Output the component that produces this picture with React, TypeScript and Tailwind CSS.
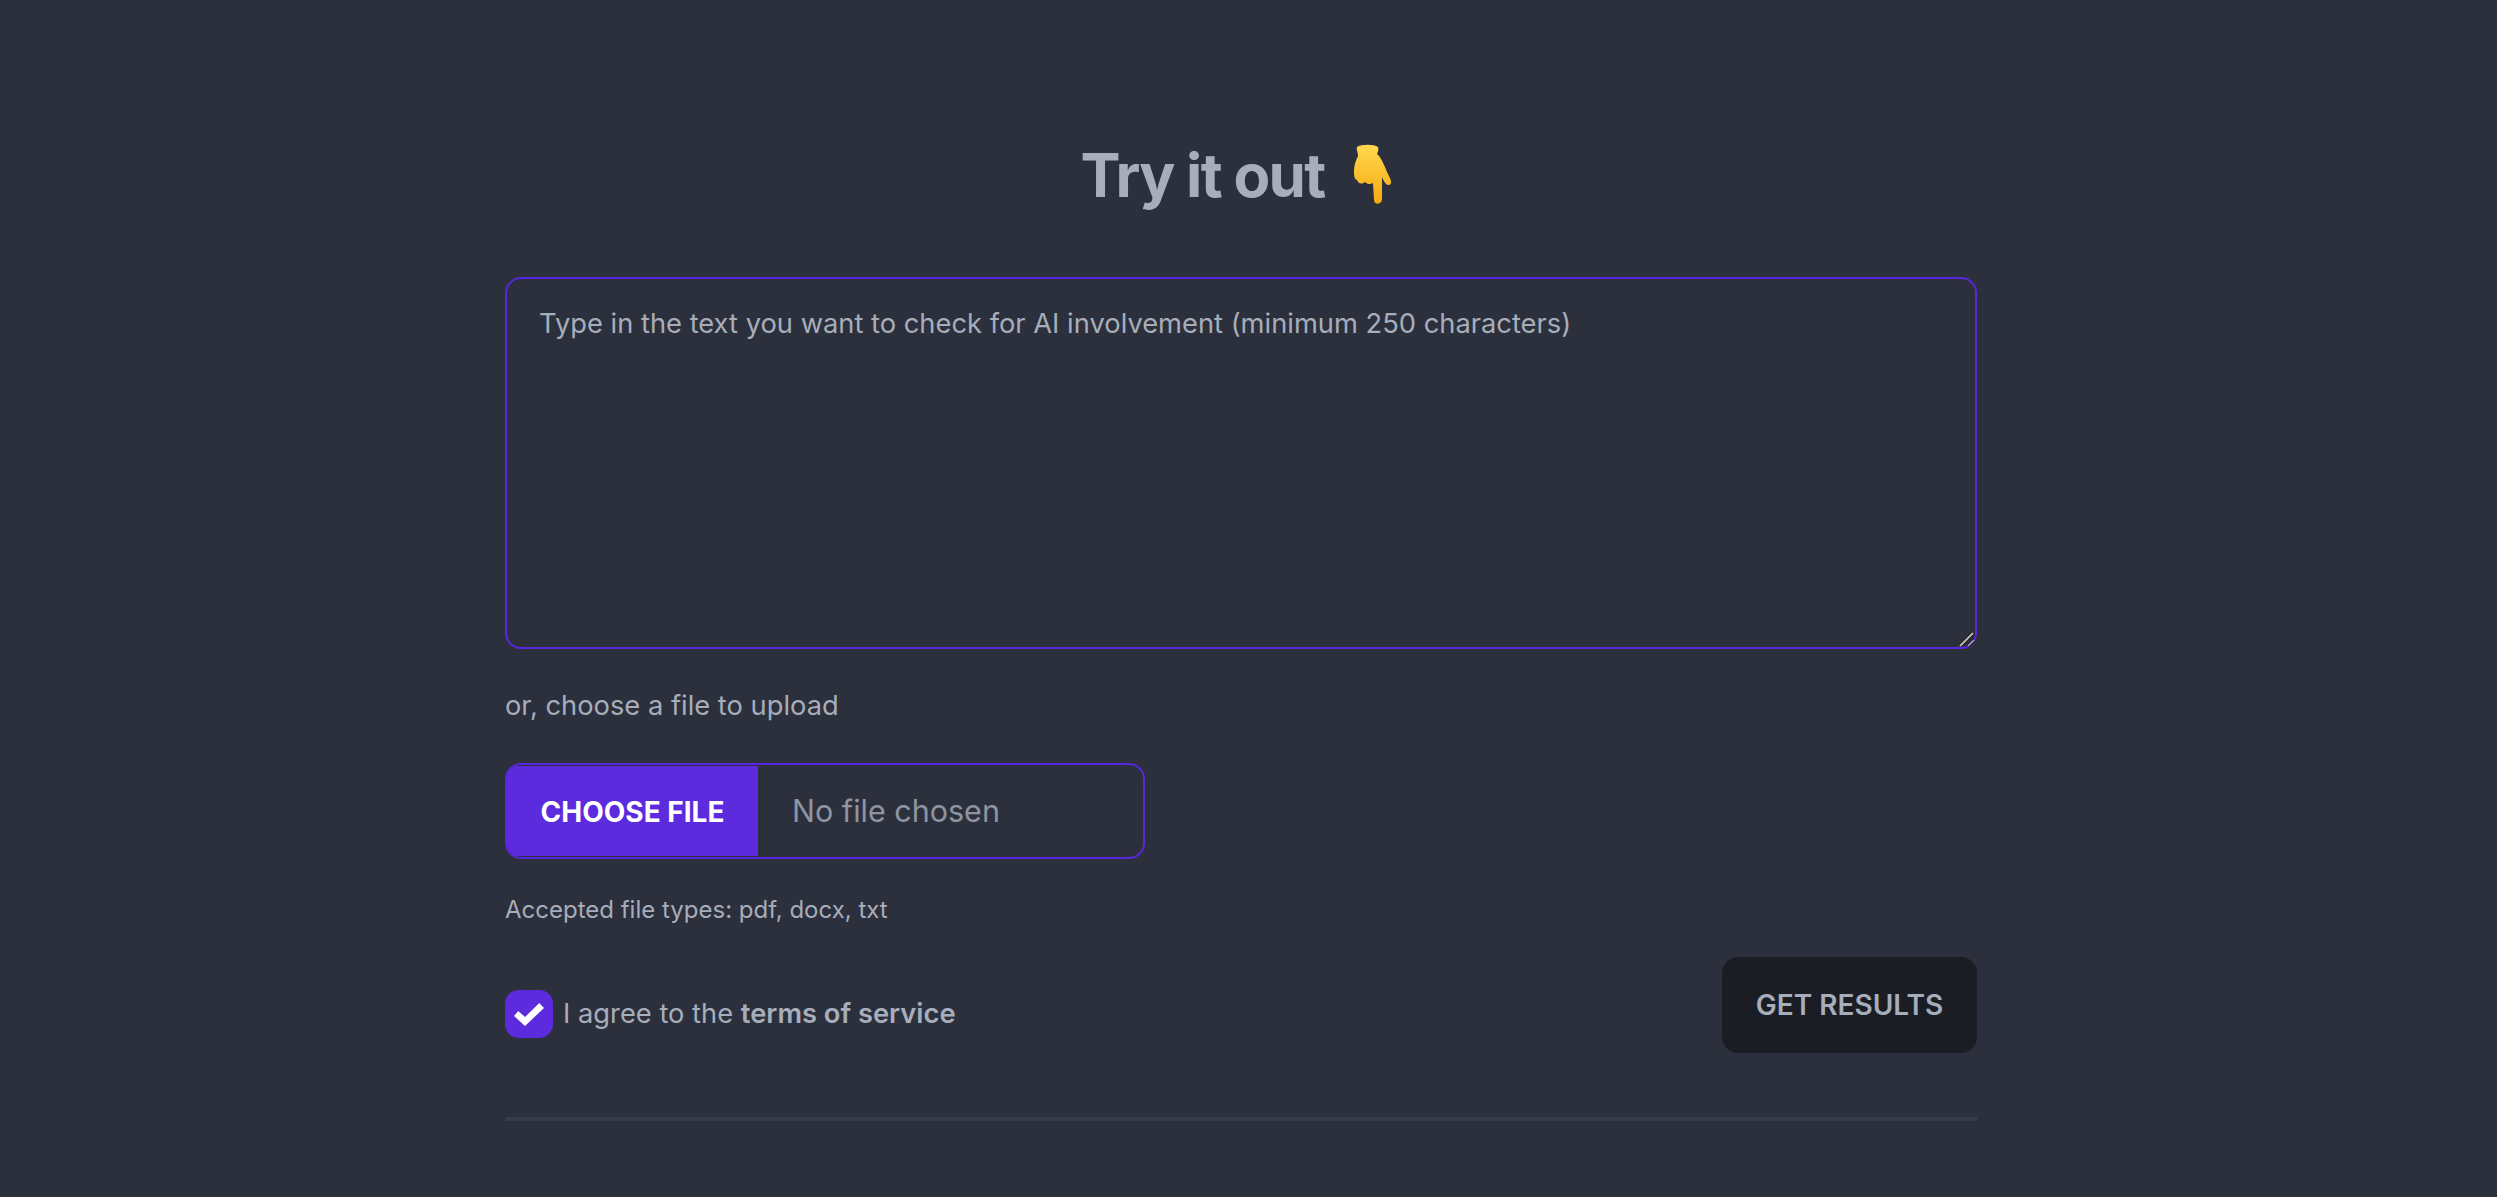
export default function App() {
  return (
    <div className="min-h-[1197px] bg-[#2c303c] pr-[15px] font-['Inter','Liberation_Sans',sans-serif] text-[#a6adbb]">
      <div className="mx-auto w-[1472px] pt-[139px]">
        {/* Heading */}
        <h1 className="flex items-center justify-center gap-[17px] text-[60px] leading-[72px] font-bold tracking-[-1.7px]">
          <span>Try it out</span>
          <svg viewBox="0 0 60 64" className="h-16 w-[60px]" role="img" aria-label="pointing down">
            <defs>
              <linearGradient id="hand" x1="0" y1="0" x2="0" y2="1">
                <stop offset="0" stopColor="#ffd84f" />
                <stop offset="1" stopColor="#f7a90f" />
              </linearGradient>
            </defs>
            <path
              fill="url(#hand)"
              d="M16 4 C20 1 33 1 37 4 C38 6 37 9 36 11 C40 14 42 20 44 24 C46 30 49 34 50 38 C51 42 47 43 45 41 C43 39 42 36 41 34 L41 56 C41 62 33 62 33 57 L32 40 C29 42 26 41 24 39 C20 42 17 40 16 37 C13 36 13 32 13 28 C13 22 15 17 17 13 C17 9 15 6 16 4 Z"
            />
          </svg>
        </h1>

        {/* Text input */}
        <div className="relative mt-[66px]">
          <textarea
            placeholder="Type in the text you want to check for AI involvement (minimum 250 characters)"
            className="block h-[372px] w-full resize-none rounded-2xl border-2 border-[#5a27e0] bg-transparent px-8 py-[25px] text-[27.3px] leading-10 outline-none placeholder:text-[#a6adbb]"
          />
          {/* resize grip */}
          <svg viewBox="0 0 16 16" className="absolute right-[2px] bottom-[2px] size-4" aria-hidden="true">
            <path d="M1 15 L14 2" stroke="#1a1a1a" strokeWidth="4" />
            <path d="M1 15 L14 2" stroke="#b8b8b8" strokeWidth="2" />
            <path d="M9 15 L15 9" stroke="#1a1a1a" strokeWidth="3" />
            <path d="M9 15 L15 9" stroke="#b9a8f0" strokeWidth="1.5" />
          </svg>
        </div>

        <p className="mt-[37px] text-[27.3px] leading-10">or, choose a file to upload</p>

        <input
          type="file"
          className="mt-[37px] block h-24 w-[640px] rounded-2xl border-2 border-[#5a27e0] bg-transparent pr-8 text-[30.5px] leading-[92px] text-[#8e94a1] file:mr-[34px] file:h-[90px] file:w-[251px] file:border-0 file:bg-[#5b2bdd] file:text-[28px] file:font-bold file:text-white file:uppercase"
        />

        <p className="mt-[35px] text-2xl leading-8">Accepted file types: pdf, docx, txt</p>

        {/* Terms and submit */}
        <div className="mt-[31px] flex items-start justify-between">
          <label className="mt-[33px] flex items-center gap-[10px] text-[27.3px] leading-10">
            <span className="flex size-12 items-center justify-center rounded-[14px] bg-[#5b2bdd]">
              <svg viewBox="0 0 48 48" className="size-12" aria-hidden="true">
                <path fill="#fff" d="M9 26 L13.3 21 L20 27 L34.3 13 L39 18 L20 36 Z" />
              </svg>
            </span>
            <span>
              I agree to the <span className="font-semibold">terms of service</span>
            </span>
          </label>
          <button className="h-24 w-[255px] rounded-2xl bg-[#1a1d24] text-[28px] font-semibold">GET RESULTS</button>
        </div>

        <hr className="mt-16 h-1 border-0 bg-[#373c4a]" />
      </div>
    </div>
  );
}
